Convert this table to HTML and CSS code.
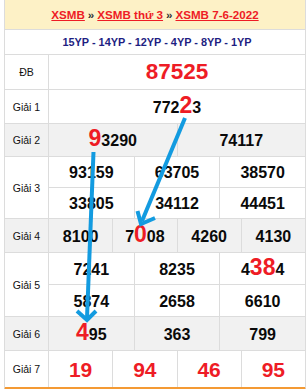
FILE: index.html
```html
<!DOCTYPE html>
<html lang="vi">
<head>
<meta charset="utf-8">
<title>XSMB 7-6-2022</title>
<link rel="stylesheet" href="styles.css">
</head>
<body>
<div class="page">
  <div class="board">
    <div class="head">
      <a href="#">XSMB</a> <span class="sep">»</span> <a href="#">XSMB thứ 3</a> <span class="sep">»</span> <a href="#">XSMB 7-6-2022</a>
    </div>
    <div class="yp">15YP - 14YP - 12YP - 4YP - 8YP - 1YP</div>

    <div class="row">
      <div class="lbl">ĐB</div>
      <div class="cells one h34"><div class="cell db">87525</div></div>
    </div>
    <div class="row">
      <div class="lbl">Giải 1</div>
      <div class="cells one h33"><div class="cell num"><span>772<span class="hi">2</span>3</span></div></div>
    </div>
    <div class="row alt">
      <div class="lbl">Giải 2</div>
      <div class="cells two h32">
        <div class="cell num"><span><span class="hi">9</span>3290</span></div>
        <div class="cell num">74117</div>
      </div>
    </div>
    <div class="row">
      <div class="lbl">Giải 3</div>
      <div class="cells three g3">
        <div class="cell num">93159</div>
        <div class="cell num">63705</div>
        <div class="cell num">38570</div>
        <div class="cell num">33805</div>
        <div class="cell num">34112</div>
        <div class="cell num">44451</div>
      </div>
    </div>
    <div class="row alt">
      <div class="lbl">Giải 4</div>
      <div class="cells four h33">
        <div class="cell num">8100</div>
        <div class="cell num"><span>7<span class="hi">0</span>08</span></div>
        <div class="cell num">4260</div>
        <div class="cell num">4130</div>
      </div>
    </div>
    <div class="row">
      <div class="lbl">Giải 5</div>
      <div class="cells three g5">
        <div class="cell num">7241</div>
        <div class="cell num">8235</div>
        <div class="cell num"><span>4<span class="hi">38</span>4</span></div>
        <div class="cell num">5874</div>
        <div class="cell num">2658</div>
        <div class="cell num">6610</div>
      </div>
    </div>
    <div class="row alt">
      <div class="lbl">Giải 6</div>
      <div class="cells three h33">
        <div class="cell num"><span><span class="hi">4</span>95</span></div>
        <div class="cell num">363</div>
        <div class="cell num">799</div>
      </div>
    </div>
    <div class="row last">
      <div class="lbl">Giải 7</div>
      <div class="cells four h36">
        <div class="cell g7">19</div>
        <div class="cell g7">94</div>
        <div class="cell g7">46</div>
        <div class="cell g7">95</div>
      </div>
    </div>
  </div>

  <svg class="arrows" width="308" height="389" viewBox="0 0 308 389">
    <g fill="none" stroke="#139be0" stroke-width="4">
      <line x1="185" y1="118" x2="142" y2="221"/>
      <polyline points="137.5,211 141,224 155,218"/>
      <line x1="93.5" y1="152" x2="87" y2="318"/>
      <polyline points="77,311 87,320 96,311"/>
    </g>
  </svg>
</div>
</body>
</html>
```

FILE: styles.css
```css
* { box-sizing: border-box; }

html, body {
  margin: 0;
  padding: 0;
  background: #ffffff;
}

.page {
  position: relative;
  width: 308px;
  height: 389px;
  overflow: hidden;
  font-family: "Liberation Sans", Arial, sans-serif;
}

.board {
  margin-left: 4px;
  width: 302px;
  border-left: 1px solid #dcdcdc;
  border-right: 1px solid #dcdcdc;
  border-bottom: 4px solid #f49a34;
}

.head {
  height: 30px;
  background: #fdf1c6;
  border-bottom: 1px solid #dcdcdc;
  display: flex;
  align-items: center;
  justify-content: center;
  gap: 3px;
  font-size: 11.6px;
  font-weight: bold;
  white-space: nowrap;
}

.head a {
  color: #ee1c25;
  text-decoration: underline;
}

.head .sep {
  color: #333333;
}

.yp {
  height: 25px;
  border-bottom: 1px solid #dcdcdc;
  display: flex;
  align-items: center;
  justify-content: center;
  font-size: 10.9px;
  font-weight: bold;
  color: #1e1e82;
  padding-left: 4px;
}

.row {
  display: grid;
  grid-template-columns: 44px 1fr;
  border-bottom: 1px solid #dcdcdc;
  background: #ffffff;
}

.row.last {
  border-bottom: none;
}

.row.alt {
  background: #f1f1f1;
}

.lbl {
  border-right: 1px solid #dcdcdc;
  display: flex;
  align-items: center;
  justify-content: center;
  font-size: 10.5px;
  color: #111111;
}

.cells {
  display: grid;
  gap: 1px;
  background: #dcdcdc;
}

.cells.one { grid-template-columns: 1fr; }
.cells.two { grid-template-columns: 1fr 1fr; }
.cells.three { grid-template-columns: 1fr 1fr 1fr; }
.cells.four { grid-template-columns: 1fr 1fr 1fr 1fr; }

.h32 { grid-auto-rows: 32px; }
.h33 { grid-auto-rows: 33px; }
.h34 { grid-auto-rows: 34px; }
.h36 { grid-auto-rows: 36px; }
.g3 { grid-template-rows: 30px 30px; }
.g5 { grid-template-rows: 31px 31px; }

.cell {
  background: #ffffff;
  display: flex;
  align-items: center;
  justify-content: center;
  line-height: 1;
  white-space: nowrap;
}

.row.alt .cell {
  background: #f1f1f1;
}

.num {
  font-size: 16px;
  font-weight: bold;
  color: #0a0a0a;
  padding-top: 2px;
}

.num .hi {
  font-size: 23px;
  line-height: 0;
  color: #ee1c25;
}

.db {
  font-size: 22.5px;
  font-weight: bold;
  color: #ee1c25;
}

.g7 {
  font-size: 21px;
  font-weight: bold;
  color: #ee1c25;
}

.arrows {
  position: absolute;
  left: 0;
  top: 0;
  pointer-events: none;
}
```
